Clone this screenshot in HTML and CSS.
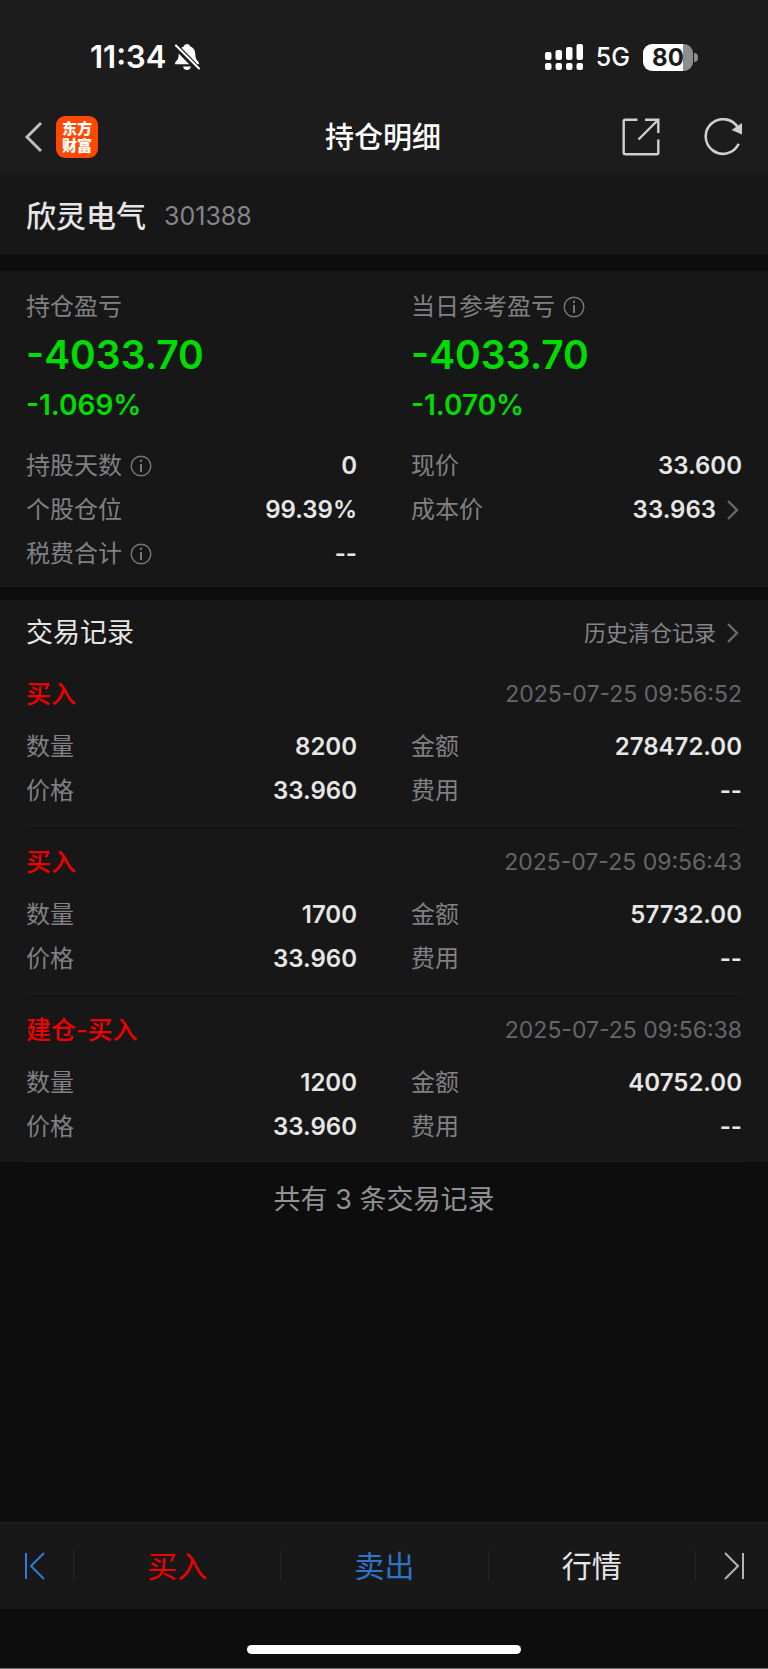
FILE: index.html
```html
<!DOCTYPE html>
<html lang="zh-CN">
<head>
    <meta charset="utf-8">
    <meta name="viewport" content="width=device-width, initial-scale=1">
    <title>持仓明细</title>
    <link rel="stylesheet" href="styles.css">
</head>
<body>
    <header class="header">
        <div class="status">
            <div class="status-left">
                <span class="clock">11:34</span>
                <svg width="26" height="28" viewBox="0 0 26 28">
                    <path d="M13 1c1.800 0 2.700 1 3 2.200 3.600 1.300 5.200 4.300 5.300 8 .1 4 .9 5.300 2.400 6.900 1 1 1.300 1.700 1.300 3.200H1c0-1.500.3-2.200 1.300-3.200 1.500-1.600 2.300-2.900 2.400-6.900.1-3.700 1.700-6.700 5.300-8C10.300 2 11.200 1 13 1zM9 23.500h8c-.4 2-2 3.500-4 3.500s-3.600-1.500-4-3.500z" fill="#fff"/>
                    <path d="M0 1.500L25 27" stroke="#1c1c1c" stroke-width="6"/>
                    <path d="M2 2.500L25 25.500" stroke="#fff" stroke-width="2" stroke-linecap="round"/>
                </svg>
            </div>
            <div class="status-right">
                <svg width="38" height="28" viewBox="0 0 38 28" fill="#fff">
                    <rect x="0" y="9" width="6.500" height="8" rx="2"/>
                    <rect x="10.500" y="7" width="6.500" height="10" rx="2"/>
                    <rect x="21" y="4" width="6.500" height="13" rx="2"/>
                    <rect x="31.500" y="1" width="6.500" height="16" rx="2"/>
                    <rect x="0" y="20" width="6.500" height="7" rx="2"/>
                    <rect x="10.500" y="20" width="6.500" height="7" rx="2"/>
                    <rect x="21" y="20" width="6.500" height="7" rx="2"/>
                    <rect x="31.500" y="20" width="6.500" height="7" rx="2"/>
                </svg>
                <span class="network">5G</span>
                <span class="battery">80</span>
            </div>
        </div>
        <nav class="nav">
            <div class="nav-left">
                <button class="icon-btn" aria-label="返回">
                    <svg width="20" height="32" viewBox="0 0 20 32"><path d="M17 2L3 16l14 14" fill="none" stroke="#bdbdbd" stroke-width="3"/></svg>
                </button>
                <div class="logo">东方<br>财富</div>
            </div>
            <h1 class="title">持仓明细</h1>
            <div class="nav-right">
                <button class="icon-btn" aria-label="分享">
                    <svg width="38" height="38" viewBox="0 0 38 38" fill="none" stroke="#cfcfcf" stroke-width="2.400">
                        <path d="M15.500 1.700H3.200q-1.500 0-1.500 1.500v31.600q0 1.500 1.500 1.500h31.600q1.500 0 1.500-1.500V21.500"/>
                        <path d="M23 1.700h13.300V15M36 2L16.500 21.500"/>
                    </svg>
                </button>
                <button class="icon-btn" aria-label="刷新">
                    <svg width="38" height="38" viewBox="0 0 38 38">
                        <path d="M34.700 25.800A17.300 17.300 0 1 1 34 9.800" fill="none" stroke="#cfcfcf" stroke-width="2.600"/>
                        <path d="M38 5v11.500L27.500 12z" fill="#cfcfcf"/>
                    </svg>
                </button>
            </div>
        </nav>
    </header>

    <main>
        <section class="panel stock">
            <h2 class="stock-name">欣灵电气</h2>
            <span class="stock-code">301388</span>
        </section>

        <section class="panel summary">
            <div class="cols">
                <div>
                    <div class="label">持仓盈亏</div>
                    <div class="profit">-4033.70</div>
                    <div class="percent">-1.069%</div>
                </div>
                <div>
                    <div class="label">当日参考盈亏
                        <svg class="info" width="22" height="22" viewBox="0 0 22 22"><circle cx="11" cy="11" r="9.800" fill="none" stroke="#77777b" stroke-width="1.400"/><path d="M11 9v8M11 4.800v2.200" stroke="#77777b" stroke-width="2"/></svg>
                    </div>
                    <div class="profit">-4033.70</div>
                    <div class="percent">-1.070%</div>
                </div>
            </div>
            <dl class="cols data">
                <div class="row">
                    <dt class="label">持股天数
                        <svg class="info" width="22" height="22" viewBox="0 0 22 22"><circle cx="11" cy="11" r="9.800" fill="none" stroke="#77777b" stroke-width="1.400"/><path d="M11 9v8M11 4.800v2.200" stroke="#77777b" stroke-width="2"/></svg>
                    </dt>
                    <dd>0</dd>
                </div>
                <div class="row"><dt class="label">现价</dt><dd>33.600</dd></div>
                <div class="row"><dt class="label">个股仓位</dt><dd>99.39%</dd></div>
                <div class="row">
                    <dt class="label">成本价</dt>
                    <dd>33.963<svg class="more" width="26" height="22" viewBox="0 0 26 22"><path d="M12 2l9 9-9 9" fill="none" stroke="#69696c" stroke-width="2.400"/></svg></dd>
                </div>
                <div class="row">
                    <dt class="label">税费合计
                        <svg class="info" width="22" height="22" viewBox="0 0 22 22"><circle cx="11" cy="11" r="9.800" fill="none" stroke="#77777b" stroke-width="1.400"/><path d="M11 9v8M11 4.800v2.200" stroke="#77777b" stroke-width="2"/></svg>
                    </dt>
                    <dd>--</dd>
                </div>
            </dl>
        </section>

        <section class="panel">
            <div class="list-head">
                <h2 class="list-title">交易记录</h2>
                <a class="history" href="#">历史清仓记录<svg class="more" width="26" height="22" viewBox="0 0 26 22"><path d="M12 2l9 9-9 9" fill="none" stroke="#69696c" stroke-width="2.400"/></svg></a>
            </div>

            <article class="record">
                <div class="record-head">
                    <h3 class="side">买入</h3>
                    <time class="time">2025-07-25 09:56:52</time>
                </div>
                <dl class="cols data">
                    <div class="row"><dt class="label">数量</dt><dd>8200</dd></div>
                    <div class="row"><dt class="label">金额</dt><dd>278472.00</dd></div>
                    <div class="row"><dt class="label">价格</dt><dd>33.960</dd></div>
                    <div class="row"><dt class="label">费用</dt><dd>--</dd></div>
                </dl>
            </article>

            <article class="record">
                <div class="record-head">
                    <h3 class="side">买入</h3>
                    <time class="time">2025-07-25 09:56:43</time>
                </div>
                <dl class="cols data">
                    <div class="row"><dt class="label">数量</dt><dd>1700</dd></div>
                    <div class="row"><dt class="label">金额</dt><dd>57732.00</dd></div>
                    <div class="row"><dt class="label">价格</dt><dd>33.960</dd></div>
                    <div class="row"><dt class="label">费用</dt><dd>--</dd></div>
                </dl>
            </article>

            <article class="record">
                <div class="record-head">
                    <h3 class="side">建仓-买入</h3>
                    <time class="time">2025-07-25 09:56:38</time>
                </div>
                <dl class="cols data">
                    <div class="row"><dt class="label">数量</dt><dd>1200</dd></div>
                    <div class="row"><dt class="label">金额</dt><dd>40752.00</dd></div>
                    <div class="row"><dt class="label">价格</dt><dd>33.960</dd></div>
                    <div class="row"><dt class="label">费用</dt><dd>--</dd></div>
                </dl>
            </article>
        </section>

        <p class="total">共有 3 条交易记录</p>
    </main>

    <footer class="footer">
        <div class="tabs">
            <button class="tab" aria-label="上一只">
                <svg width="22" height="28" viewBox="0 0 22 28" fill="none" stroke="#2f7bd8" stroke-width="2"><path d="M2 1v26M20 1L7 14l13 13"/></svg>
            </button>
            <button class="tab buy">买入</button>
            <button class="tab sell">卖出</button>
            <button class="tab">行情</button>
            <button class="tab" aria-label="下一只">
                <svg width="22" height="28" viewBox="0 0 22 28" fill="none" stroke="#b5b5b5" stroke-width="2"><path d="M20 1v26M2 1l13 13L2 27"/></svg>
            </button>
        </div>
        <div class="home"></div>
    </footer>
</body>
</html>
```
FILE: styles.css
```css
* {
    box-sizing: border-box;
}
body {
    margin: 0;
    min-height: 100vh;
    display: flex;
    flex-direction: column;
    background-color: #0d0d0d;
    color: #e6e6e6;
    font-family: Inter, "Noto Sans CJK SC", sans-serif;
    font-size: 24px;
    line-height: 1.2;
}
h1, h2, h3, p, dl, dd {
    margin: 0;
    font-weight: 400;
}
svg {
    display: block;
    flex: none;
}
button {
    border: 0;
    padding: 0;
    background: none;
    color: inherit;
    font: inherit;
}

/* top bars */
.header {
    background-color: #1c1c1c;
    color: #fff;
}
.status {
    display: flex;
    justify-content: space-between;
    height: 99px;
    padding: 15px 75px 0 90px;
}
.status-left, .status-right {
    display: flex;
    align-items: center;
}
.status-left {
    gap: 8px;
}
.status-right {
    gap: 13px;
}
.clock {
    font-size: 31px;
    font-weight: 600;
}
.network {
    font-size: 25px;
    font-weight: 500;
}
.battery {
    position: relative;
    width: 50px;
    line-height: 27px;
    border-radius: 9px;
    background: linear-gradient(to right, #fff 80%, #8e8e8e 80%);
    color: #1c1c1c;
    font-weight: 700;
    text-align: center;
}
.battery::after {
    content: "";
    position: absolute;
    left: 51px;
    top: 9px;
    width: 4px;
    height: 9px;
    border-radius: 0 4px 4px 0;
    background-color: #8e8e8e;
}
.nav {
    display: grid;
    grid-template-columns: 1fr auto 1fr;
    align-items: center;
    height: 76px;
    padding: 0 26px 0 24px;
}
.nav-left, .nav-right {
    display: flex;
    align-items: center;
}
.nav-left {
    gap: 12px;
}
.nav-right {
    justify-content: flex-end;
    gap: 44px;
}
.logo {
    width: 42px;
    height: 42px;
    padding-top: 4px;
    border-radius: 9px;
    background-color: #ff4800;
    font-size: 15px;
    font-weight: 900;
    line-height: 17px;
    text-align: center;
}
.title {
    padding-top: 2px;
    font-size: 29px;
    font-weight: 500;
}

/* panels */
.panel {
    padding: 0 26px;
    background-color: #171717;
}
.label {
    display: flex;
    align-items: center;
    gap: 8px;
    color: #808085;
}
.cols {
    display: grid;
    grid-template-columns: 1fr 1fr;
    column-gap: 54px;
}
.data {
    line-height: 44px;
}
.row {
    display: flex;
    justify-content: space-between;
}
.row dd {
    display: flex;
    align-items: center;
    font-weight: 600;
}
.stock {
    display: flex;
    align-items: center;
    gap: 18px;
    height: 79px;
    padding-top: 2px;
}
.stock-name {
    font-size: 30px;
    font-weight: 500;
}
.stock-code {
    color: #85858a;
    font-size: 25px;
}
.summary {
    margin: 17px 0 13px;
    padding-top: 18px;
    padding-bottom: 11px;
    line-height: 36px;
}
.profit {
    color: #00dc00;
    font-size: 39px;
    font-weight: 600;
    line-height: 60px;
}
.percent {
    margin-bottom: 19px;
    color: #00dc00;
    font-size: 28px;
    font-weight: 600;
    line-height: 40px;
}

/* trade records */
.list-head {
    display: flex;
    align-items: center;
    justify-content: space-between;
    height: 58px;
    padding-top: 8px;
}
.list-title {
    font-size: 27px;
}
.history {
    display: flex;
    align-items: center;
    color: #85858a;
    font-size: 22px;
    text-decoration: none;
}
.record {
    padding: 21px 0 12px;
    border-bottom: 1px solid #202020;
}
.record-head {
    display: flex;
    align-items: center;
    justify-content: space-between;
    margin-bottom: 16px;
    line-height: 30px;
}
.side {
    color: #f00000;
    font-size: 25px;
    font-weight: 500;
}
.time {
    color: #66666a;
    font-size: 23px;
}
.total {
    color: #929294;
    font-size: 27px;
    line-height: 76px;
    text-align: center;
}

/* bottom bar */
.footer {
    margin-top: auto;
    border-bottom: 1px solid #707070;
}
.tabs {
    display: grid;
    grid-template-columns: 73px 1fr 1fr 1fr 73px;
    align-items: center;
    height: 87px;
    border-top: 1px solid #202020;
    background-color: #181818;
}
.tab {
    display: flex;
    align-items: center;
    justify-content: center;
    height: 30px;
    font-size: 30px;
}
.tab + .tab {
    border-left: 1px solid #252525;
}
.tab:first-child {
    padding-right: 4px;
}
.tab:last-child {
    padding-left: 4px;
}
.home {
    width: 274px;
    height: 9px;
    margin: 36px auto 14px;
    border-radius: 5px;
    background-color: #fff;
}
.buy {
    color: #f00000;
}
.sell {
    color: #2f74c8;
}
```
